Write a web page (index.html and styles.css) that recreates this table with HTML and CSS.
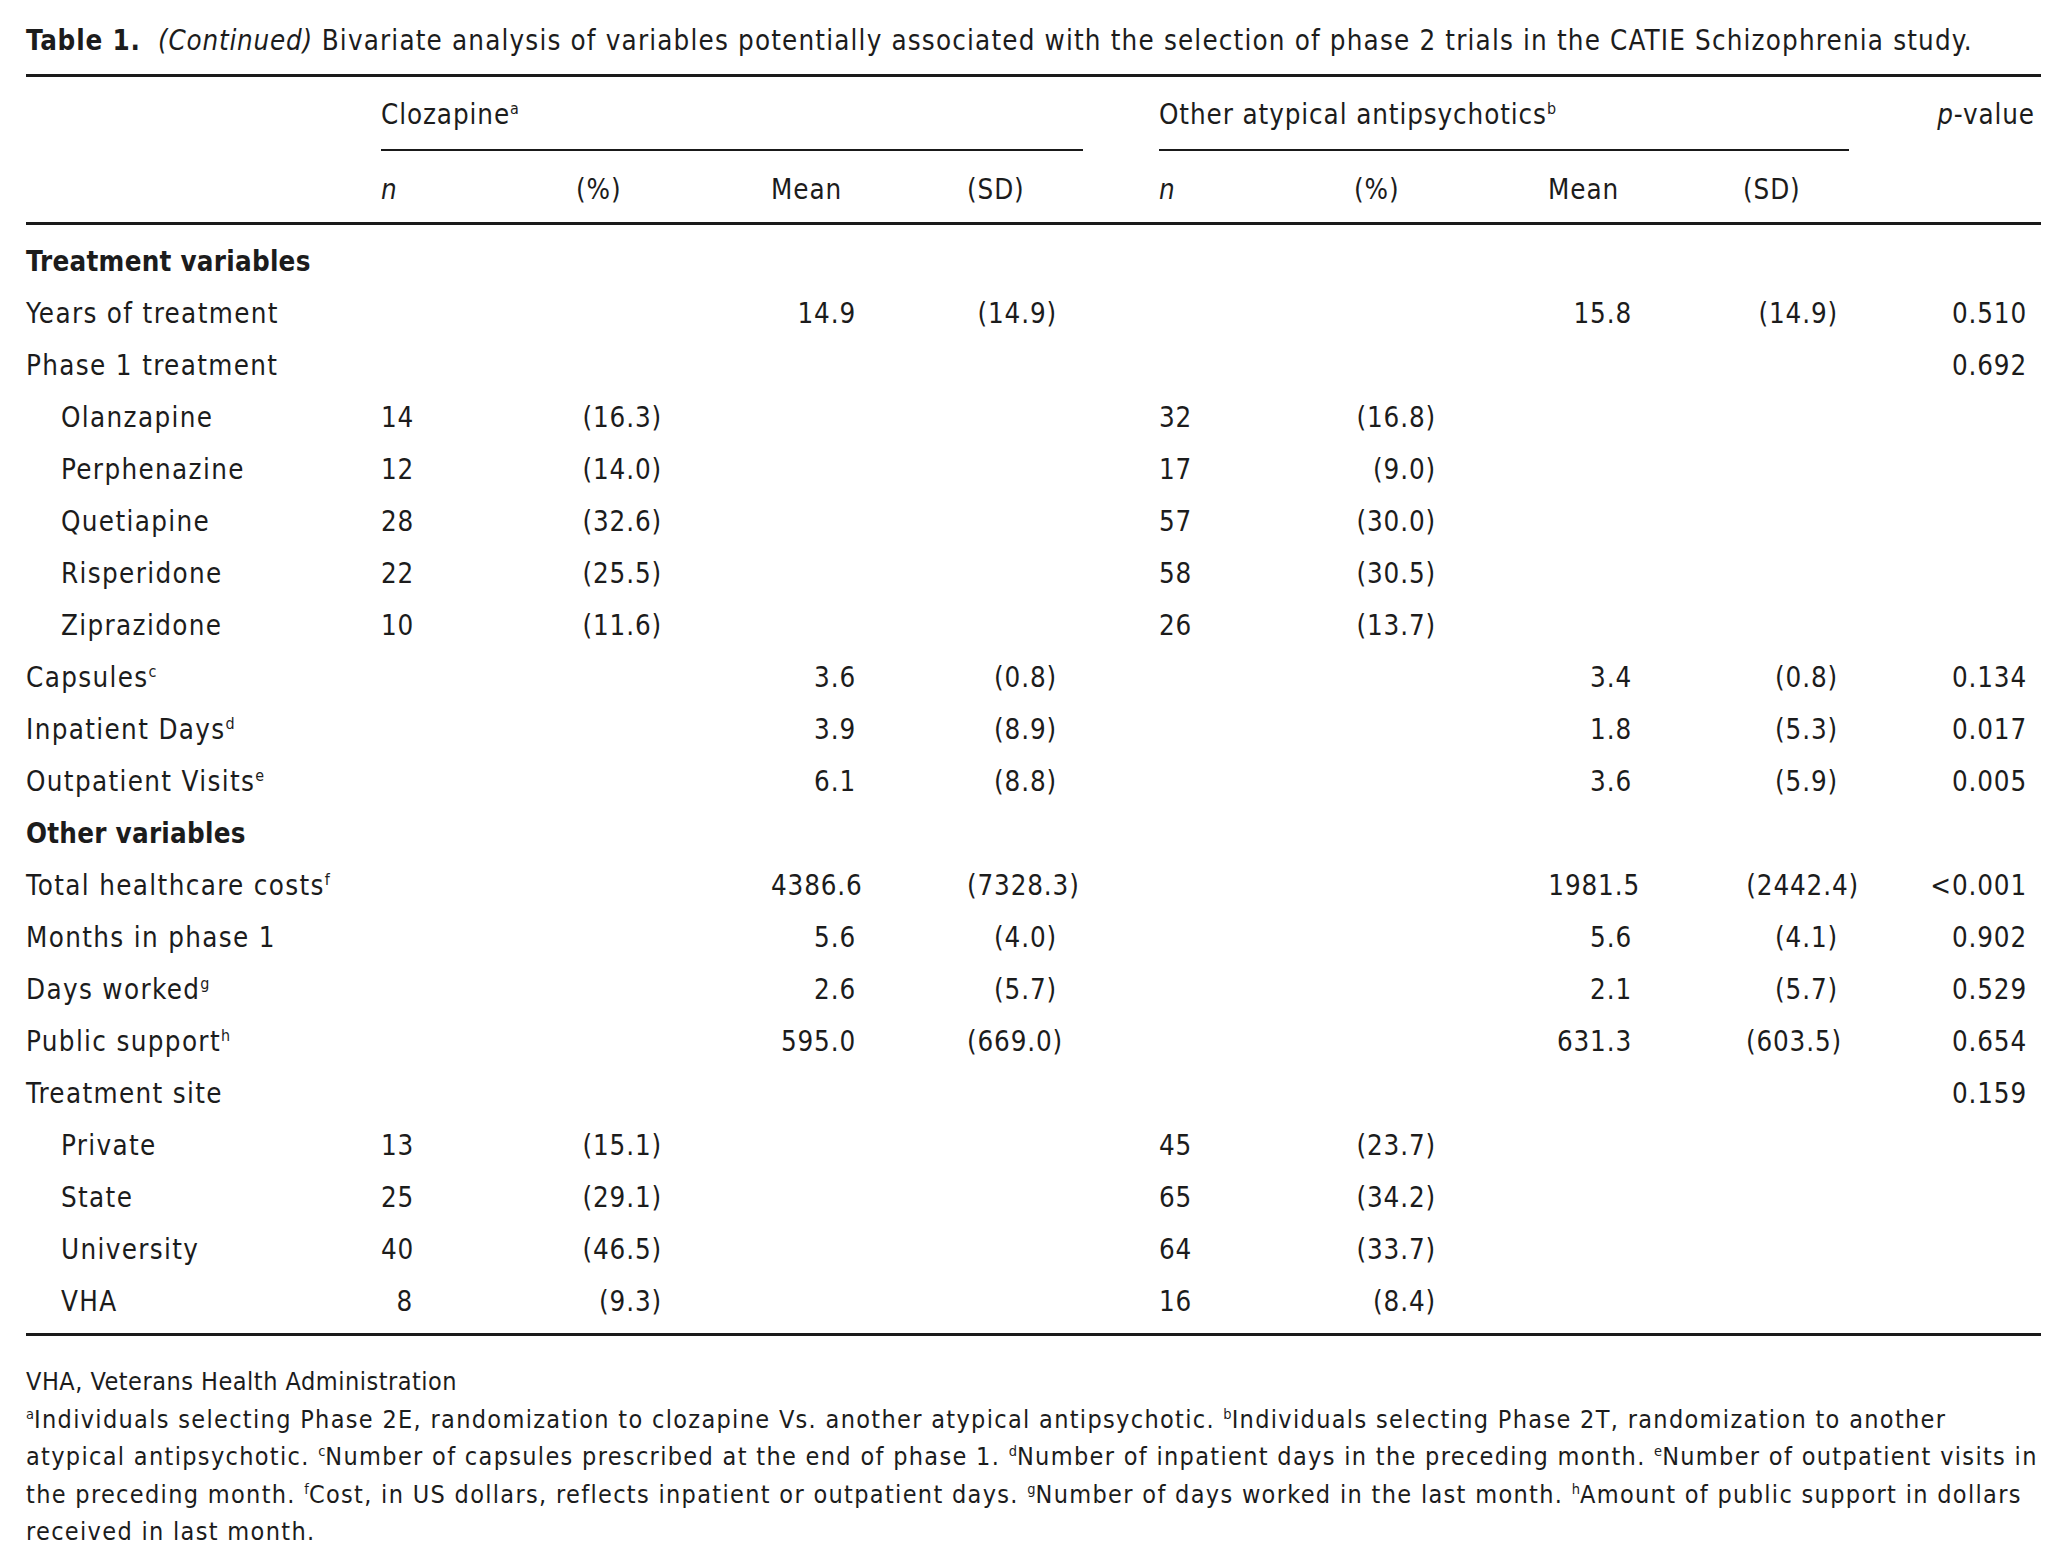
FILE: index.html
```html
<!DOCTYPE html>
<html lang="en">
<head>
<meta charset="utf-8">
<title>Table 1 (Continued)</title>
<link rel="stylesheet" href="styles.css">
</head>
<body>
<div class="page">
  <p class="caption"><b>Table 1.</b>&nbsp; <i>(Continued)</i> <span class="cap-text">Bivariate analysis of variables potentially associated with the selection of phase 2 trials in the CATIE Schizophrenia study.</span></p>
  <table class="data">
    <colgroup>
      <col class="k0"><col class="k1"><col class="k2"><col class="k3"><col class="k4"><col class="k5"><col class="k6"><col class="k7"><col class="k8"><col class="k9">
    </colgroup>
    <thead>
      <tr class="h1">
        <th></th>
        <th colspan="4" class="grp"><div class="grp-l">Clozapine<sup>a</sup></div></th>
        <th colspan="4" class="grp"><div class="grp-r">Other atypical antipsychotics<sup>b</sup></div></th>
        <th class="pv"><i>p</i>-value</th>
      </tr>
      <tr class="h2">
        <th></th>
        <th><i>n</i></th><th>(%)</th><th>Mean</th><th>(SD)</th>
        <th><i>n</i></th><th>(%)</th><th>Mean</th><th>(SD)</th>
        <th></th>
      </tr>
    </thead>
    <tbody>
      <tr class="sec first"><td colspan="10">Treatment variables</td></tr>
      <tr><td class="lab">Years of treatment</td><td class="c1"></td><td class="c2"></td><td class="c3">14.9</td><td class="c4">(14.9)</td><td class="c5"></td><td class="c6"></td><td class="c7">15.8</td><td class="c8">(14.9)</td><td class="c9">0.510</td></tr>
      <tr><td class="lab">Phase 1 treatment</td><td class="c1"></td><td class="c2"></td><td class="c3"></td><td class="c4"></td><td class="c5"></td><td class="c6"></td><td class="c7"></td><td class="c8"></td><td class="c9">0.692</td></tr>
      <tr><td class="lab sub">Olanzapine</td><td class="c1">14</td><td class="c2">(16.3)</td><td class="c3"></td><td class="c4"></td><td class="c5">32</td><td class="c6">(16.8)</td><td class="c7"></td><td class="c8"></td><td class="c9"></td></tr>
      <tr><td class="lab sub">Perphenazine</td><td class="c1">12</td><td class="c2">(14.0)</td><td class="c3"></td><td class="c4"></td><td class="c5">17</td><td class="c6">(9.0)</td><td class="c7"></td><td class="c8"></td><td class="c9"></td></tr>
      <tr><td class="lab sub">Quetiapine</td><td class="c1">28</td><td class="c2">(32.6)</td><td class="c3"></td><td class="c4"></td><td class="c5">57</td><td class="c6">(30.0)</td><td class="c7"></td><td class="c8"></td><td class="c9"></td></tr>
      <tr><td class="lab sub">Risperidone</td><td class="c1">22</td><td class="c2">(25.5)</td><td class="c3"></td><td class="c4"></td><td class="c5">58</td><td class="c6">(30.5)</td><td class="c7"></td><td class="c8"></td><td class="c9"></td></tr>
      <tr><td class="lab sub">Ziprazidone</td><td class="c1">10</td><td class="c2">(11.6)</td><td class="c3"></td><td class="c4"></td><td class="c5">26</td><td class="c6">(13.7)</td><td class="c7"></td><td class="c8"></td><td class="c9"></td></tr>
      <tr><td class="lab">Capsules<sup>c</sup></td><td class="c1"></td><td class="c2"></td><td class="c3">3.6</td><td class="c4">(0.8)</td><td class="c5"></td><td class="c6"></td><td class="c7">3.4</td><td class="c8">(0.8)</td><td class="c9">0.134</td></tr>
      <tr><td class="lab">Inpatient Days<sup>d</sup></td><td class="c1"></td><td class="c2"></td><td class="c3">3.9</td><td class="c4">(8.9)</td><td class="c5"></td><td class="c6"></td><td class="c7">1.8</td><td class="c8">(5.3)</td><td class="c9">0.017</td></tr>
      <tr><td class="lab">Outpatient Visits<sup>e</sup></td><td class="c1"></td><td class="c2"></td><td class="c3">6.1</td><td class="c4">(8.8)</td><td class="c5"></td><td class="c6"></td><td class="c7">3.6</td><td class="c8">(5.9)</td><td class="c9">0.005</td></tr>
      <tr class="sec"><td colspan="10">Other variables</td></tr>
      <tr><td class="lab">Total healthcare costs<sup>f</sup></td><td class="c1"></td><td class="c2"></td><td class="c3"><span class="ov-s">4386.6</span></td><td class="c4"><span class="ov-l">(7328.3)</span></td><td class="c5"></td><td class="c6"></td><td class="c7"><span class="ov-m">1981.5</span></td><td class="c8"><span class="ov-l">(2442.4)</span></td><td class="c9">&lt;0.001</td></tr>
      <tr><td class="lab">Months in phase 1</td><td class="c1"></td><td class="c2"></td><td class="c3">5.6</td><td class="c4">(4.0)</td><td class="c5"></td><td class="c6"></td><td class="c7">5.6</td><td class="c8">(4.1)</td><td class="c9">0.902</td></tr>
      <tr><td class="lab">Days worked<sup>g</sup></td><td class="c1"></td><td class="c2"></td><td class="c3">2.6</td><td class="c4">(5.7)</td><td class="c5"></td><td class="c6"></td><td class="c7">2.1</td><td class="c8">(5.7)</td><td class="c9">0.529</td></tr>
      <tr><td class="lab">Public support<sup>h</sup></td><td class="c1"></td><td class="c2"></td><td class="c3">595.0</td><td class="c4"><span class="ov-s">(669.0)</span></td><td class="c5"></td><td class="c6"></td><td class="c7">631.3</td><td class="c8"><span class="ov-s">(603.5)</span></td><td class="c9">0.654</td></tr>
      <tr><td class="lab">Treatment site</td><td class="c1"></td><td class="c2"></td><td class="c3"></td><td class="c4"></td><td class="c5"></td><td class="c6"></td><td class="c7"></td><td class="c8"></td><td class="c9">0.159</td></tr>
      <tr><td class="lab sub">Private</td><td class="c1">13</td><td class="c2">(15.1)</td><td class="c3"></td><td class="c4"></td><td class="c5">45</td><td class="c6">(23.7)</td><td class="c7"></td><td class="c8"></td><td class="c9"></td></tr>
      <tr><td class="lab sub">State</td><td class="c1">25</td><td class="c2">(29.1)</td><td class="c3"></td><td class="c4"></td><td class="c5">65</td><td class="c6">(34.2)</td><td class="c7"></td><td class="c8"></td><td class="c9"></td></tr>
      <tr><td class="lab sub">University</td><td class="c1">40</td><td class="c2">(46.5)</td><td class="c3"></td><td class="c4"></td><td class="c5">64</td><td class="c6">(33.7)</td><td class="c7"></td><td class="c8"></td><td class="c9"></td></tr>
      <tr class="last"><td class="lab sub">VHA</td><td class="c1">8</td><td class="c2">(9.3)</td><td class="c3"></td><td class="c4"></td><td class="c5">16</td><td class="c6">(8.4)</td><td class="c7"></td><td class="c8"></td><td class="c9"></td></tr>
    </tbody>
  </table>
  <div class="notes">
    <p class="abbr">VHA, Veterans Health Administration</p>
    <p class="fn"><sup>a</sup>Individuals selecting Phase 2E, randomization to clozapine Vs. another atypical antipsychotic. <sup>b</sup>Individuals selecting Phase 2T, randomization to another<br>atypical antipsychotic. <sup>c</sup>Number of capsules prescribed at the end of phase 1. <sup>d</sup>Number of inpatient days in the preceding month. <sup>e</sup>Number of outpatient visits in<br>the preceding month. <sup>f</sup>Cost, in US dollars, reflects inpatient or outpatient days. <sup>g</sup>Number of days worked in the last month. <sup>h</sup>Amount of public support in dollars<br>received in last month.</p>
  </div>
</div>
</body>
</html>
```

FILE: styles.css
```css
html, body {
  margin: 0;
  padding: 0;
  background: #ffffff;
}

body {
  font-family: "DejaVu Sans Condensed", "DejaVu Sans", sans-serif;
  font-stretch: semi-condensed;
  color: #1c1c1c;
  font-size: 27.5px;
  letter-spacing: 1.1px;
}

.page {
  padding: 0 24px 0 26px;
}

.caption {
  margin: 20px 0 14px 0;
  line-height: 40px;
  white-space: nowrap;
  letter-spacing: 0.8px;
}

.caption b {
  font-weight: bold;
}

.cap-text {
  letter-spacing: 1.17px;
}

sup {
  font-size: 0.58em;
  line-height: 0;
  vertical-align: 0.62em;
  letter-spacing: 0;
}

.data {
  width: 2015px;
  border-collapse: collapse;
  table-layout: fixed;
}

.k0 { width: 355px; }
.k1 { width: 195px; }
.k2 { width: 195px; }
.k3 { width: 196px; }
.k4 { width: 192px; }
.k5 { width: 195px; }
.k6 { width: 194px; }
.k7 { width: 195px; }
.k8 { width: 157px; }
.k9 { width: 141px; }

.data thead {
  border-top: 3px solid #1a1a1a;
  border-bottom: 3px solid #1a1a1a;
}

.data th {
  font-weight: normal;
  text-align: left;
  padding: 0;
  line-height: 34px;
  white-space: nowrap;
  letter-spacing: 0.9px;
}

.h1 th {
  padding-top: 20px;
  vertical-align: top;
}

.grp-l {
  width: 702px;
  padding-bottom: 18px;
  border-bottom: 2px solid #1a1a1a;
}

.grp-r {
  width: 690px;
  padding-bottom: 18px;
  border-bottom: 2px solid #1a1a1a;
}

.h1 .pv {
  text-align: right;
  padding-right: 6px;
}

.h2 th {
  padding-top: 21px;
  padding-bottom: 16px;
}

.data td {
  padding: 0;
  height: 52px;
  line-height: 52px;
  white-space: nowrap;
  text-align: right;
  letter-spacing: 0.85px;
}

.data td.lab {
  text-align: left;
  letter-spacing: 1.35px;
}

.data td.sub {
  padding-left: 35px;
}

.sec td {
  text-align: left;
  font-weight: bold;
  letter-spacing: 0.25px;
}

.first td {
  padding-top: 10px;
}

.last td {
  padding-bottom: 6px;
}

.data tbody {
  border-bottom: 3px solid #1a1a1a;
}

.data td.c1 { padding-right: 163px; }
.data td.c2 { padding-right: 109px; }
.data td.c3 { padding-right: 111px; }
.data td.c4 { padding-right: 102px; }
.data td.c5 { padding-right: 163px; }
.data td.c6 { padding-right: 112px; }
.data td.c7 { padding-right: 111px; }
.data td.c8 { padding-right: 62px; }
.data td.c9 { padding-right: 14px; }

.ov-s, .ov-m, .ov-l {
  display: inline-block;
}
.ov-s { margin-right: -4px; }
.ov-m { margin-right: -8px; }
.ov-l { margin-right: -21px; }

.notes {
  margin-top: 27px;
  font-size: 25px;
  line-height: 37.6px;
}

.notes p {
  margin: 0;
}

.abbr {
  letter-spacing: 0.5px;
}

.fn {
  white-space: nowrap;
  letter-spacing: 1.32px;
}
```
